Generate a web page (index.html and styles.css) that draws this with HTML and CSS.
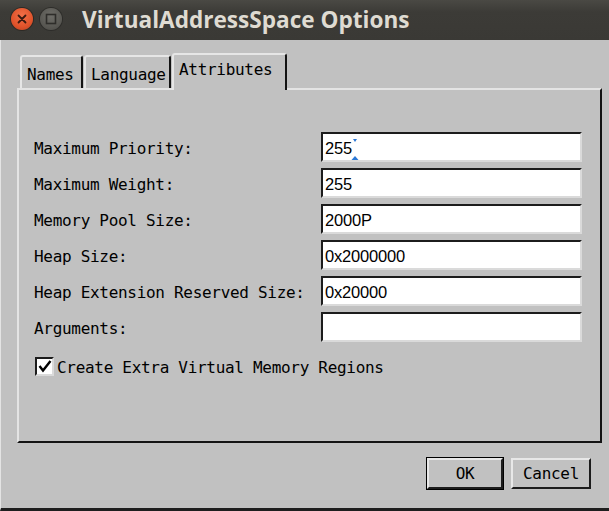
FILE: index.html
```html
<!DOCTYPE html>
<html>
<head>
<meta charset="utf-8">
<link rel="stylesheet" href="styles.css">
</head>
<body>
<div class="window">
  <div class="titlebar">
    <div class="wbtn close">
      <svg width="22" height="22" viewBox="0 0 22 22"><path d="M7.5 7.5 L14.5 14.5 M14.5 7.5 L7.5 14.5" stroke="#3a1a10" stroke-width="1.8" stroke-linecap="round"/></svg>
    </div>
    <div class="wbtn max">
      <svg width="22" height="22" viewBox="0 0 22 22"><rect x="6.5" y="6.5" width="9" height="9" fill="none" stroke="#2e2d2a" stroke-width="1.6"/></svg>
    </div>
    <div class="title">VirtualAddressSpace Options</div>
  </div>
  <div class="client">
    <div class="tabs">
      <div class="tab names">Names</div>
      <div class="tab lang">Language</div>
      <div class="tab active">Attributes</div>
    </div>
    <div class="panel">
      <div class="form">
        <div class="label">Maximum Priority:</div>
        <div class="entry">255<svg class="caret" width="8" height="24" viewBox="0 0 8 24"><path d="M2 2 L6 2 L4 5 Z" fill="#2a78d6"/><path d="M4 19 L7.5 23 L0.5 23 Z" fill="#2a78d6"/></svg></div>
        <div class="label">Maximum Weight:</div>
        <div class="entry">255</div>
        <div class="label">Memory Pool Size:</div>
        <div class="entry">2000P</div>
        <div class="label">Heap Size:</div>
        <div class="entry">0x2000000</div>
        <div class="label">Heap Extension Reserved Size:</div>
        <div class="entry">0x20000</div>
        <div class="label">Arguments:</div>
        <div class="entry"></div>
      </div>
      <div class="check">
        <div class="box">
          <svg width="14" height="14" viewBox="0 0 14 14"><path d="M1.5 7 L5 11.5 L12.5 2" fill="none" stroke="#000" stroke-width="2.4"/></svg>
        </div>
        <span>Create Extra Virtual Memory Regions</span>
      </div>
    </div>
    <div class="buttons">
      <div class="btn default">OK</div>
      <div class="btn">Cancel</div>
    </div>
  </div>
</div>
</body>
</html>
```

FILE: styles.css
```css
html, body {
  margin: 0;
  padding: 0;
}
body {
  width: 609px;
  height: 511px;
  overflow: hidden;
  background: #c1c1c1;
  font-family: "DejaVu Sans Mono", monospace;
  font-size: 16px;
  letter-spacing: -0.3px;
  color: #000;
}
.window {
  display: flex;
  flex-direction: column;
  height: 511px;
}
.titlebar {
  height: 40px;
  box-sizing: border-box;
  background: linear-gradient(#4a4944, #3c3b37 30%, #3a3935);
  display: flex;
  align-items: flex-start;
  padding: 8px 0 0 11px;
}
.wbtn {
  width: 22px;
  height: 22px;
  border-radius: 50%;
  display: flex;
}
.close {
  background: radial-gradient(circle at 50% 35%, #f27048, #e0532b 60%, #b8401f);
  box-shadow: 0 0 0 1px #2e2a25;
}
.max {
  margin-left: 7px;
  background: radial-gradient(circle at 50% 35%, #6e6d68, #5a5954 60%, #4a4945);
  box-shadow: 0 0 0 1px #2e2d2a;
}
.title {
  margin-left: 20px;
  margin-top: -3px;
  font-family: "Open Sans", "DejaVu Sans", sans-serif;
  font-weight: bold;
  font-size: 22.6px;
  letter-spacing: 0;
  color: #dfdbd2;
  line-height: 30px;
}
.client {
  flex: 1;
  display: flex;
  flex-direction: column;
  border-left: 1px solid #e4e4e4;
  border-bottom: 3px solid #1e1e1e;
}
.tabs {
  display: flex;
  align-items: flex-end;
  margin-top: 13px;
  height: 35px;
  padding-left: 19px;
  position: relative;
  z-index: 1;
}
.tab {
  box-sizing: border-box;
  height: 33px;
  border-top: 2px solid #e6e6e6;
  border-left: 2px solid #e6e6e6;
  border-right: 2px solid #141414;
  border-radius: 3px 3px 0 0;
  padding: 3px 0 0 5px;
  display: flex;
  align-items: center;
  background: #c1c1c1;
}
.tab.names { width: 63px; }
.tab.lang { width: 87px; margin-left: 1px; }
.tab.active {
  width: 115px;
  height: 37px;
  margin-left: 1px;
  margin-bottom: -2px;
  padding-top: 0;
  padding-bottom: 6px;
}
.panel {
  box-sizing: border-box;
  margin-left: 16px;
  width: 585px;
  height: 355px;
  border-top: 2px solid #e4e4e4;
  border-left: 2px solid #e4e4e4;
  border-right: 2px solid #141414;
  border-bottom: 2px solid #141414;
  padding: 42px 0 0 15px;
}
.form {
  display: grid;
  grid-template-columns: 287px 261px;
  grid-auto-rows: 30px;
  row-gap: 6px;
}
.label {
  align-self: center;
  white-space: nowrap;
  padding-top: 3px;
}
.entry {
  box-sizing: border-box;
  background: #fff;
  border-top: 2px solid #1c1c1c;
  border-left: 2px solid #1c1c1c;
  border-right: 2px solid #dadada;
  border-bottom: 2px solid #dadada;
  padding: 2px 0 0 2px;
  font-family: "Liberation Sans", Arial, sans-serif;
  font-size: 16.5px;
  letter-spacing: -0.2px;
  line-height: 24px;
  display: flex;
  align-items: center;
}
.caret {
  margin-left: -1px;
  margin-top: 1px;
}
.check {
  margin-top: 14px;
  display: flex;
  align-items: center;
  height: 20px;
}
.check span {
  padding-top: 2px;
}
.box {
  box-sizing: border-box;
  width: 19px;
  height: 19px;
  margin-left: 1px;
  margin-right: 3px;
  background: #fff;
  border-top: 2px solid #1c1c1c;
  border-left: 2px solid #1c1c1c;
  border-right: 2px solid #dadada;
  border-bottom: 2px solid #dadada;
  display: flex;
  align-items: center;
  justify-content: center;
}
.buttons {
  display: flex;
  justify-content: flex-end;
  align-items: center;
  gap: 8px;
  margin-top: 15px;
  padding-right: 18px;
}
.btn {
  box-sizing: border-box;
  height: 31px;
  border-top: 2px solid #e8e8e8;
  border-left: 2px solid #e8e8e8;
  border-right: 2px solid #1c1c1c;
  border-bottom: 2px solid #1c1c1c;
  display: flex;
  align-items: center;
  justify-content: center;
  width: 80px;
}
.btn.default {
  width: 76px;
  box-shadow: 0 0 0 1px #000;
}
```
